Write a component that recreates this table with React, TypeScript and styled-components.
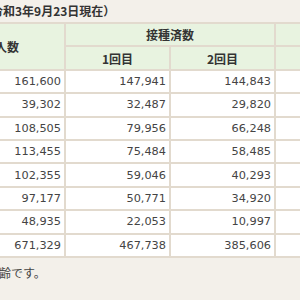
import React from 'react';
import styled, { createGlobalStyle } from 'styled-components';

const COLORS = {
  page: '#f3f0ea',
  head: '#e8f3e0',
  line: '#e2dace',
  text: '#444444',
  title: '#333333',
};

const GlobalStyle = createGlobalStyle`
  html, body {
    margin: 0;
    padding: 0;
    background: ${COLORS.page};
    overflow: hidden;
  }
  body {
    width: 300px;
    height: 300px;
    font-family: "Noto Sans CJK JP", "DejaVu Sans", sans-serif;
  }
`;

const Container = styled.div`
  width: 300px;
  height: 300px;
  overflow: hidden;
`;

const Title = styled.h2`
  margin: 0 0 0 -69px;
  height: 22px;
  line-height: 22px;
  font-size: 12px;
  font-weight: 700;
  color: ${COLORS.title};
  white-space: nowrap;
`;

const Table = styled.table`
  border-collapse: collapse;
  table-layout: fixed;
  margin-left: -156px;
  width: 640px;
  background: #fff;
`;

const HeadCell = styled.th`
  background: ${COLORS.head};
  border: 2px solid ${COLORS.line};
  height: 21.4px;
  padding: 0;
  font-size: 12px;
  font-weight: 700;
  color: ${COLORS.title};
  text-align: center;
  white-space: nowrap;
`;

const Cell = styled.td<{ $label?: boolean }>`
  border: 2px solid ${COLORS.line};
  height: 21.4px;
  padding: 0 3px;
  font-family: ${({ $label }) => ($label ? '"Noto Sans CJK JP", sans-serif' : '"DejaVu Sans", sans-serif')};
  font-size: ${({ $label }) => ($label ? '12px' : '11.3px')};
  color: ${COLORS.text};
  text-align: ${({ $label }) => ($label ? 'center' : 'right')};
  white-space: nowrap;
`;

const Note = styled.p`
  margin: 7px 0 0 -133px;
  font-size: 12px;
  line-height: 16px;
  color: ${COLORS.text};
  white-space: nowrap;
`;

const rows = [
  { label: '12～19歳', total: '161,600', first: '147,941', second: '144,843' },
  { label: '20～29歳', total: '39,302', first: '32,487', second: '29,820' },
  { label: '30～39歳', total: '108,505', first: '79,956', second: '66,248' },
  { label: '40～49歳', total: '113,455', first: '75,484', second: '58,485' },
  { label: '50～59歳', total: '102,355', first: '59,046', second: '40,293' },
  { label: '60～64歳', total: '97,177', first: '50,771', second: '34,920' },
  { label: '65歳以上', total: '48,935', first: '22,053', second: '10,997' },
  { label: '合計', total: '671,329', first: '467,738', second: '385,606' },
];

const App = () => {
  return (
    <Container>
      <GlobalStyle />
      <Title>接種状況（令和3年9月23日現在）</Title>
      <Table>
        <colgroup>
          <col style={{ width: 80 }} />
          <col style={{ width: 140 }} />
          <col style={{ width: 105 }} />
          <col style={{ width: 105 }} />
          <col style={{ width: 105 }} />
          <col style={{ width: 105 }} />
        </colgroup>
        <thead>
          <tr>
            <HeadCell rowSpan={2}>年代</HeadCell>
            <HeadCell rowSpan={2}>対象人数</HeadCell>
            <HeadCell colSpan={2}>接種済数</HeadCell>
            <HeadCell colSpan={2}>接種率</HeadCell>
          </tr>
          <tr>
            <HeadCell>1回目</HeadCell>
            <HeadCell>2回目</HeadCell>
            <HeadCell>1回目</HeadCell>
            <HeadCell>2回目</HeadCell>
          </tr>
        </thead>
        <tbody>
          {rows.map((row) => (
            <tr key={row.label}>
              <Cell $label>{row.label}</Cell>
              <Cell>{row.total}</Cell>
              <Cell>{row.first}</Cell>
              <Cell>{row.second}</Cell>
              <Cell />
              <Cell />
            </tr>
          ))}
        </tbody>
      </Table>
      <Note>※年齢は接種日時点の年齢です。</Note>
    </Container>
  );
};

export default App;
